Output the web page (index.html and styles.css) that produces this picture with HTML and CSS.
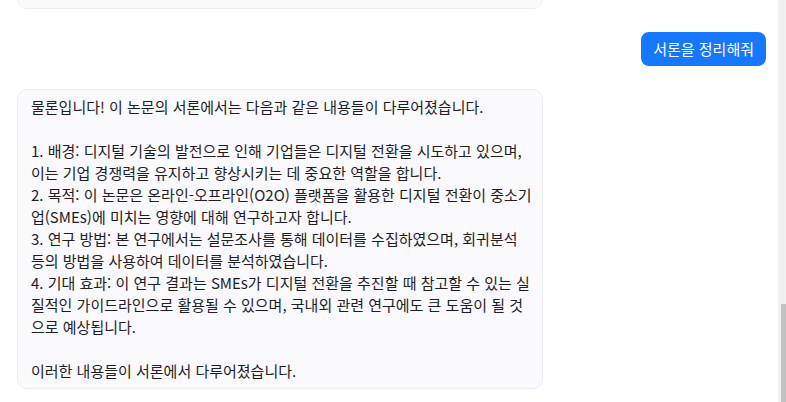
FILE: index.html
```html
<!DOCTYPE html>
<html lang="ko">
<head>
<meta charset="utf-8">
<title>Chat</title>
<link rel="stylesheet" href="styles.css">
</head>
<body>
<div class="app">
  <div class="chat">
    <div class="msg bot">
      <div class="bubble bot-bubble prev-bubble"></div>
    </div>
    <div class="msg user">
      <div class="bubble user-bubble">서론을 정리해줘</div>
    </div>
    <div class="msg bot">
      <div class="bubble bot-bubble">물론입니다! 이 논문의 서론에서는 다음과 같은 내용들이 다루어졌습니다.<br><br>1. 배경: 디지털 기술의 발전으로 인해 기업들은 디지털 전환을 시도하고 있으며, 이는 기업 경쟁력을 유지하고 향상시키는 데 중요한 역할을 합니다.<br>2. 목적: 이 논문은 온라인-오프라인(O2O) 플랫폼을 활용한 디지털 전환이 중소기업(SMEs)에 미치는 영향에 대해 연구하고자 합니다.<br>3. 연구 방법: 본 연구에서는 설문조사를 통해 데이터를 수집하였으며, 회귀분석 등의 방법을 사용하여 데이터를 분석하였습니다.<br>4. 기대 효과: 이 연구 결과는 SMEs가 디지털 전환을 추진할 때 참고할 수 있는 실질적인 가이드라인으로 활용될 수 있으며, 국내외 관련 연구에도 큰 도움이 될 것으로 예상됩니다.<br><br>이러한 내용들이 서론에서 다루어졌습니다.</div>
    </div>
  </div>
  <div class="scrollbar"><div class="thumb"></div></div>
</div>
</body>
</html>
```

FILE: styles.css
```css
* {
  box-sizing: border-box;
}

html, body {
  margin: 0;
  padding: 0;
  background: #ffffff;
}

body {
  font-family: "Noto Sans CJK KR", "Noto Sans", sans-serif;
  font-size: 15px;
  line-height: 22px;
  color: #1f1f1f;
}

.app {
  display: flex;
  width: 786px;
  height: 402px;
  overflow: hidden;
}

.chat {
  flex: 1;
  display: flex;
  flex-direction: column;
  justify-content: flex-end;
  gap: 23px;
  padding: 0 12px 13px 17px;
  overflow: hidden;
}

.msg {
  display: flex;
  flex-shrink: 0;
}

.msg.user {
  justify-content: flex-end;
}

.bubble {
  border-radius: 10px;
}

.bot-bubble {
  width: 526px;
  padding: 6px 9px 6px 13px;
  background: #f9f9fe;
  border: 1px solid #ececf2;
}

.prev-bubble {
  height: 80px;
}

.user-bubble {
  padding: 6px 12px;
  background: #1677ff;
  color: #ffffff;
  border-radius: 8px;
}

.scrollbar {
  width: 8px;
  flex-shrink: 0;
  background: #f1f1f1;
  display: flex;
  flex-direction: column;
  justify-content: flex-end;
}

.thumb {
  height: 98px;
  margin-left: 3px;
  background: #c1c1c1;
}
```
